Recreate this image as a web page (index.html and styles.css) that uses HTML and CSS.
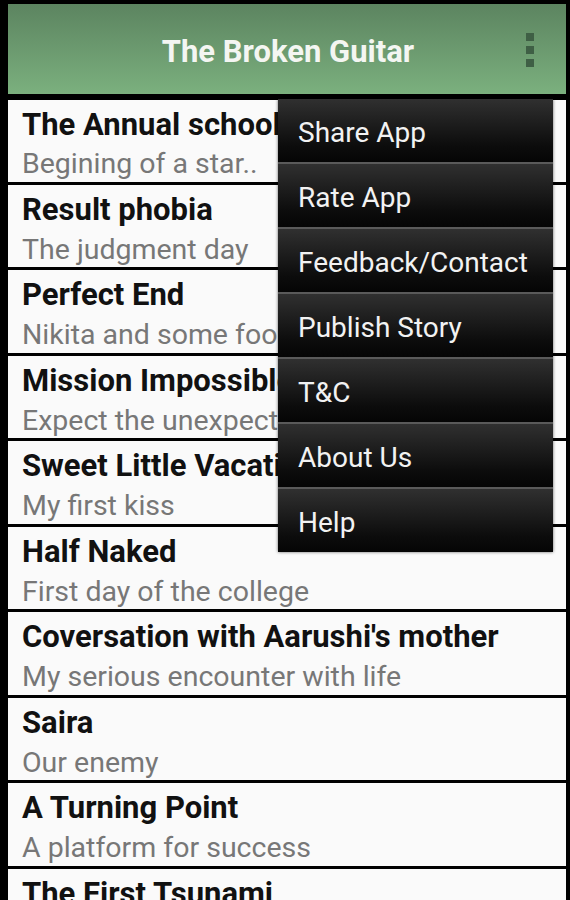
FILE: index.html
```html
<!DOCTYPE html>
<html lang="en">
<head>
    <meta charset="UTF-8">
    <meta name="viewport" content="width=device-width, initial-scale=1.0">
    <title>The Broken Guitar</title>
    <link rel="stylesheet" href="styles.css">
</head>
<body>
    <div class="screen">
        <div class="action-bar">
            <h1 class="app-title">The Broken Guitar</h1>
            <div class="overflow-btn">
                <span></span><span></span><span></span>
            </div>
        </div>

        <ul class="story-list">
            <li class="story">
                <div class="story-title">The Annual school</div>
                <div class="story-sub">Begining of a star..</div>
            </li>
            <li class="story">
                <div class="story-title">Result phobia</div>
                <div class="story-sub">The judgment day</div>
            </li>
            <li class="story">
                <div class="story-title">Perfect End</div>
                <div class="story-sub">Nikita and some food</div>
            </li>
            <li class="story">
                <div class="story-title">Mission Impossible</div>
                <div class="story-sub">Expect the unexpected</div>
            </li>
            <li class="story">
                <div class="story-title">Sweet Little Vacation</div>
                <div class="story-sub">My first kiss</div>
            </li>
            <li class="story">
                <div class="story-title">Half Naked</div>
                <div class="story-sub">First day of the college</div>
            </li>
            <li class="story">
                <div class="story-title">Coversation with Aarushi's mother</div>
                <div class="story-sub">My serious encounter with life</div>
            </li>
            <li class="story">
                <div class="story-title">Saira</div>
                <div class="story-sub">Our enemy</div>
            </li>
            <li class="story">
                <div class="story-title">A Turning Point</div>
                <div class="story-sub">A platform for success</div>
            </li>
            <li class="story">
                <div class="story-title">The First Tsunami</div>
                <div class="story-sub">Nature's fury</div>
            </li>
        </ul>

        <!-- overflow menu, opened -->
        <ul class="popup-menu">
            <li>Share App</li>
            <li>Rate App</li>
            <li>Feedback/Contact</li>
            <li>Publish Story</li>
            <li>T&amp;C</li>
            <li>About Us</li>
            <li>Help</li>
        </ul>
    </div>
</body>
</html>
```

FILE: styles.css
```css
body {
    margin: 0;
    background-color: #000;
    font-family: Roboto, "Liberation Sans", sans-serif;
    overflow: hidden;
}
.screen {
    position: relative;
    height: 900px;
    padding: 4px 4px 0 8px;
    box-sizing: border-box;
    overflow: hidden;
}
.action-bar {
    height: 90px;
    background: linear-gradient(to bottom, #5c8460, #7bb07e);
    display: flex;
    align-items: center;
    justify-content: center;
    position: relative;
}
.app-title {
    margin: 0;
    color: #f4f6f2;
    font-size: 31px;
    font-weight: bold;
    padding-left: 2px;
    padding-top: 5px;
}
.overflow-btn {
    position: absolute;
    right: 32px;
    top: 29px;
    display: flex;
    flex-direction: column;
    gap: 5px;
}
.overflow-btn span {
    width: 8px;
    height: 8px;
    background-color: #3f5f45;
}
.story-list {
    list-style: none;
    margin: 5.5px 0 0;
    padding: 0;
}
.story {
    background-color: #fafafa;
    padding: 9px 14px 1.7px;
    border-bottom: 3px solid #000;
    white-space: nowrap;
    overflow: hidden;
}
.story-title {
    font-size: 31px;
    font-weight: bold;
    color: #111;
    line-height: 32px;
}
.story-sub {
    font-size: 28.5px;
    color: #777;
    line-height: 32px;
    margin-top: 7.8px;
}
.popup-menu {
    position: absolute;
    top: 99px;
    left: 278px;
    width: 275px;
    margin: 0;
    padding: 0;
    list-style: none;
    box-shadow: 0 0 3px rgba(0, 0, 0, 0.6);
}
.popup-menu li {
    height: 61px;
    padding-top: 2px;
    line-height: 64px;
    padding-left: 20px;
    color: #f2f2f2;
    font-size: 28px;
    background: linear-gradient(to bottom, #303030, #0c0c0c 75%, #050505);
    border-top: 2px solid #5a5a5a;
}
.popup-menu li:first-child {
    border-top: none;
}
```
